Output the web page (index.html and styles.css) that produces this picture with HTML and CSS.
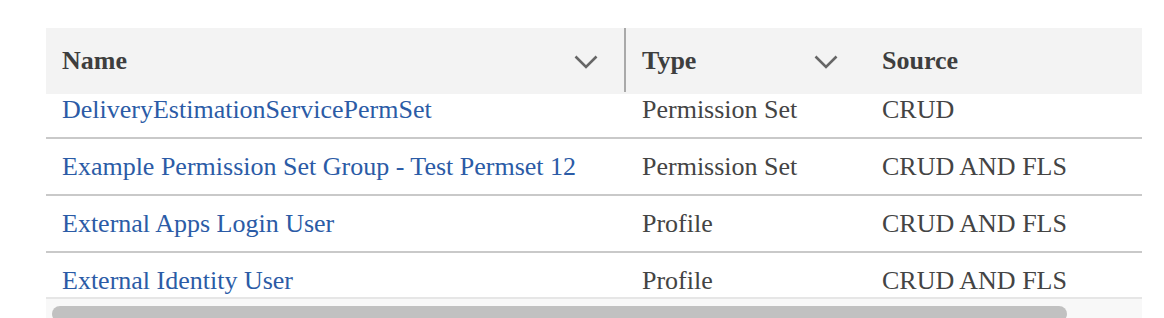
FILE: index.html
```html
<!DOCTYPE html>
<html>
<head>
<meta charset="utf-8">
<link rel="stylesheet" href="styles.css">
</head>
<body>
<div class="page">
  <div class="table">
    <div class="thead">
      <div class="th th-name">
        <span class="th-label">Name</span>
        <svg class="chev" width="24" height="14" viewBox="0 0 24 14"><path d="M1.5 1.5 L12 12 L22.5 1.5" fill="none" stroke="#666" stroke-width="2.6"/></svg>
      </div>
      <div class="divider"></div>
      <div class="th th-type">
        <span class="th-label">Type</span>
        <svg class="chev" width="24" height="14" viewBox="0 0 24 14"><path d="M1.5 1.5 L12 12 L22.5 1.5" fill="none" stroke="#666" stroke-width="2.6"/></svg>
      </div>
      <div class="th th-source">
        <span class="th-label">Source</span>
      </div>
    </div>
    <div class="tbody">
      <div class="row row-first">
        <div class="td td-name"><a class="link">DeliveryEstimationServicePermSet</a></div>
        <div class="td td-type">Permission Set</div>
        <div class="td td-source">CRUD</div>
      </div>
      <div class="row">
        <div class="td td-name"><a class="link">Example Permission Set Group - Test Permset 12</a></div>
        <div class="td td-type">Permission Set</div>
        <div class="td td-source">CRUD AND FLS</div>
      </div>
      <div class="row">
        <div class="td td-name"><a class="link">External Apps Login User</a></div>
        <div class="td td-type">Profile</div>
        <div class="td td-source">CRUD AND FLS</div>
      </div>
      <div class="row">
        <div class="td td-name"><a class="link">External Identity User</a></div>
        <div class="td td-type">Profile</div>
        <div class="td td-source">CRUD AND FLS</div>
      </div>
    </div>
    <div class="hscroll"><div class="thumb"></div></div>
  </div>
</div>
</body>
</html>
```

FILE: styles.css
```css
html, body {
  margin: 0;
  padding: 0;
  background: #ffffff;
  height: 318px;
  overflow: hidden;
}
.page {
  padding: 28px 0 0 46px;
  font-family: "Liberation Serif", "Times New Roman", serif;
}
.table {
  width: 1096px;
}
.thead {
  display: grid;
  grid-template-columns: 578px 2px 240px 1fr;
  height: 66px;
  background: #f3f3f3;
}
.th {
  display: flex;
  align-items: center;
  justify-content: space-between;
  padding-left: 16px;
  font-size: 26px;
  font-weight: bold;
  color: #3e3e3e;
}
.th-label {
  line-height: 30px;
  padding-top: 0;
}
.th-name {
  padding-right: 26px;
}
.th-type {
  padding-right: 28px;
}
.divider {
  background: #a9a9a9;
  height: 64px;
}
.chev {
  display: block;
  margin-top: 2px;
}
.tbody {
  height: 203px;
  overflow: hidden;
}
.row {
  display: grid;
  grid-template-columns: 580px 240px 1fr;
  height: 55px;
  border-bottom: 2px solid #c9c9c9;
  font-size: 26px;
  line-height: 55px;
  color: #444444;
}
.row-first {
  margin-top: -12px;
}
.td {
  padding-left: 16px;
  white-space: nowrap;
}
.link {
  color: #2b5ba6;
  text-decoration: none;
}
.hscroll {
  height: 19px;
  border-top: 2px solid #e6e6e6;
  background: #f8f8f8;
  padding: 7px 0 0 6px;
}
.thumb {
  width: 1015px;
  height: 16px;
  border-radius: 8px;
  background: #c1c1c1;
}
```
